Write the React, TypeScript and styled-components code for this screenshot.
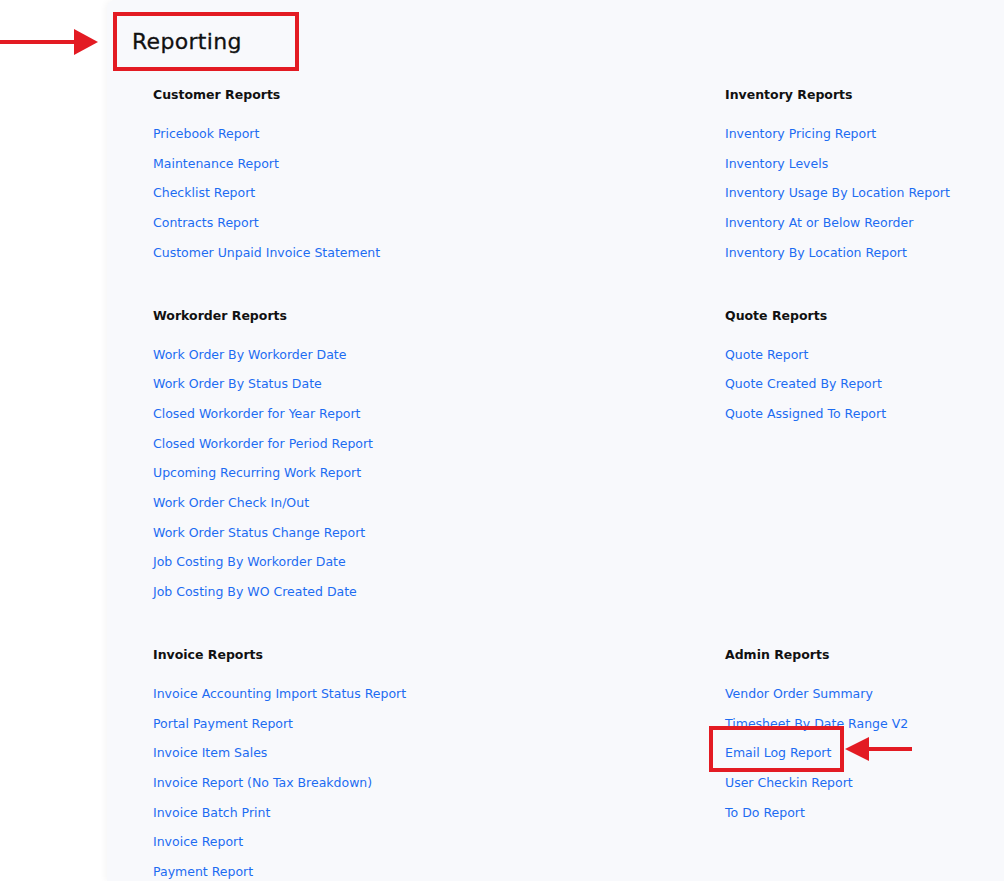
import React from "react";
import styled, { createGlobalStyle } from "styled-components";

const Global = createGlobalStyle`
  html, body { margin: 0; padding: 0; background: #ffffff; }
  body { font-family: "DejaVu Sans", "Open Sans", sans-serif; }
  * { box-sizing: border-box; }
`;

const Page = styled.div`
  position: relative;
  display: flex;
  width: 1004px;
  height: 881px;
  overflow: hidden;
  background: #ffffff;
`;

const Gutter = styled.div`
  width: 107px;
  flex: none;
`;

const Panel = styled.main`
  flex: 1;
  background: #f8f9fc;
  border-top-left-radius: 8px;
  box-shadow: -2px 0 6px rgba(0, 0, 0, 0.04);
  padding: 24px 0 0 46px;
`;

const Title = styled.h1`
  margin: 0 0 0 -21px;
  font-size: 22px;
  font-weight: 500;
  line-height: 36px;
  color: #111;
  letter-spacing: 0.3px;
  -webkit-text-stroke: 0.3px #111;
`;

const Grid = styled.div`
  display: grid;
  grid-template-columns: 572px 1fr;
  row-gap: 38px;
  margin-top: 25px;
`;

const Section = styled.section`
  display: flex;
  flex-direction: column;
`;

const Heading = styled.h2`
  margin: 0 0 14px;
  font-size: 12.5px;
  font-weight: 700;
  line-height: 20px;
  color: #111;
`;

const LinkItem = styled.a`
  display: block;
  font-size: 12.5px;
  line-height: 29.7px;
  color: #1d6cf2;
  text-decoration: none;
  white-space: nowrap;
`;

const Frame = styled.div<{ $x: number; $y: number; $w: number; $h: number }>`
  position: absolute;
  left: ${(p) => p.$x}px;
  top: ${(p) => p.$y}px;
  width: ${(p) => p.$w}px;
  height: ${(p) => p.$h}px;
  border: 4px solid #e31b23;
  pointer-events: none;
`;

const ArrowSvg = styled.svg<{ $x: number; $y: number }>`
  position: absolute;
  left: ${(p) => p.$x}px;
  top: ${(p) => p.$y}px;
  pointer-events: none;
`;

const sections: { title: string; links: string[] }[] = [
  {
    title: "Customer Reports",
    links: [
      "Pricebook Report",
      "Maintenance Report",
      "Checklist Report",
      "Contracts Report",
      "Customer Unpaid Invoice Statement",
    ],
  },
  {
    title: "Inventory Reports",
    links: [
      "Inventory Pricing Report",
      "Inventory Levels",
      "Inventory Usage By Location Report",
      "Inventory At or Below Reorder",
      "Inventory By Location Report",
    ],
  },
  {
    title: "Workorder Reports",
    links: [
      "Work Order By Workorder Date",
      "Work Order By Status Date",
      "Closed Workorder for Year Report",
      "Closed Workorder for Period Report",
      "Upcoming Recurring Work Report",
      "Work Order Check In/Out",
      "Work Order Status Change Report",
      "Job Costing By Workorder Date",
      "Job Costing By WO Created Date",
    ],
  },
  {
    title: "Quote Reports",
    links: ["Quote Report", "Quote Created By Report", "Quote Assigned To Report"],
  },
  {
    title: "Invoice Reports",
    links: [
      "Invoice Accounting Import Status Report",
      "Portal Payment Report",
      "Invoice Item Sales",
      "Invoice Report (No Tax Breakdown)",
      "Invoice Batch Print",
      "Invoice Report",
      "Payment Report",
    ],
  },
  {
    title: "Admin Reports",
    links: [
      "Vendor Order Summary",
      "Timesheet By Date Range V2",
      "Email Log Report",
      "User Checkin Report",
      "To Do Report",
    ],
  },
];

export default function App() {
  return (
    <>
      <Global />
      <Page>
        <Gutter />
        <Panel>
          <Title>Reporting</Title>
          <Grid>
            {sections.map((s) => (
              <Section key={s.title}>
                <Heading>{s.title}</Heading>
                {s.links.map((l) => (
                  <LinkItem key={l} href="#">
                    {l}
                  </LinkItem>
                ))}
              </Section>
            ))}
          </Grid>
        </Panel>

        <Frame $x={113} $y={12} $w={186} $h={59} />
        <ArrowSvg $x={0} $y={26} width={100} height={32} viewBox="0 0 100 32">
          <rect x="0" y="14" width="78" height="4" fill="#e31b23" />
          <polygon points="74,3 98,16 74,29" fill="#e31b23" />
        </ArrowSvg>

        <Frame $x={709} $y={726} $w={135} $h={46} />
        <ArrowSvg $x={844} $y={734} width={68} height={30} viewBox="0 0 68 30">
          <polygon points="1,15 25,3 25,27" fill="#e31b23" />
          <rect x="22" y="13" width="46" height="4" fill="#e31b23" />
        </ArrowSvg>
      </Page>
    </>
  );
}
